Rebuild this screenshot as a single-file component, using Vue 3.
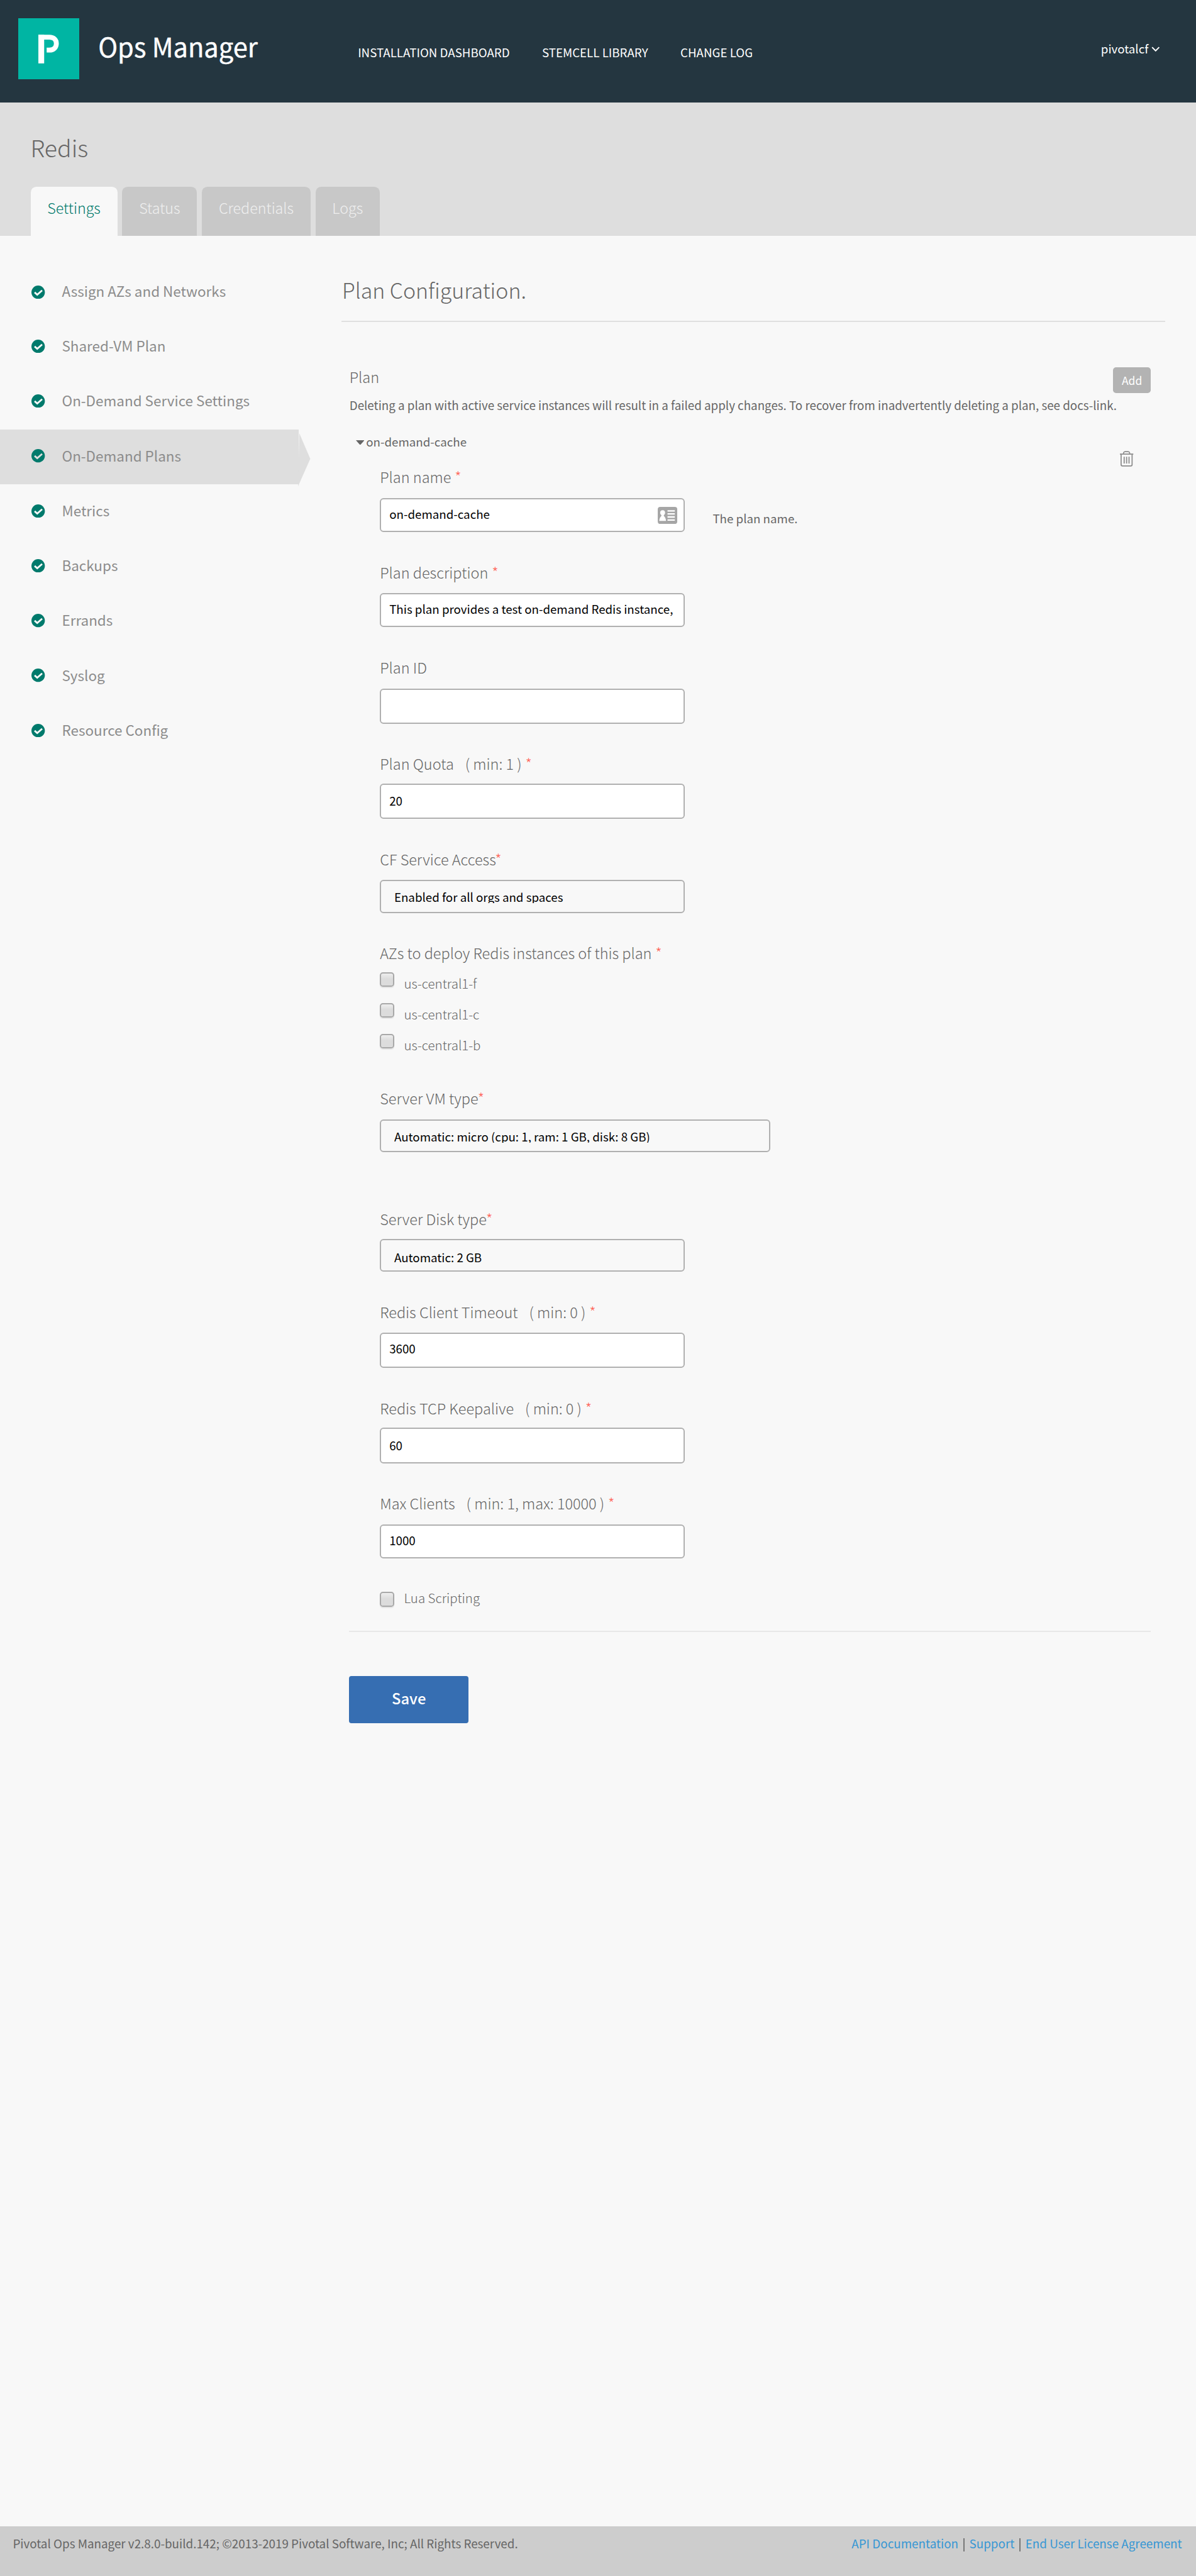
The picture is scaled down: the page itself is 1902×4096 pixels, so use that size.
<script setup>
const navLinks = ['INSTALLATION DASHBOARD', 'STEMCELL LIBRARY', 'CHANGE LOG']
const tabs = ['Settings', 'Status', 'Credentials', 'Logs']
const steps = [
  'Assign AZs and Networks',
  'Shared-VM Plan',
  'On-Demand Service Settings',
  'On-Demand Plans',
  'Metrics',
  'Backups',
  'Errands',
  'Syslog',
  'Resource Config',
]
const activeStep = 3

const fields = [
  { label: 'Plan name', required: true, value: 'on-demand-cache', help: 'The plan name.', card: true },
  { label: 'Plan description', required: true, value: 'This plan provides a test on-demand Redis instance,' },
  { label: 'Plan ID', value: '', size: 'tall' },
  { label: 'Plan Quota', range: '( min: 1 )', required: true, value: '20', size: 'tall snug' },
  { label: 'CF Service Access', required: true, tight: true, value: 'Enabled for all orgs and spaces', size: 'select' },
  {
    label: 'AZs to deploy Redis instances of this plan',
    required: true,
    zones: ['us-central1-f', 'us-central1-c', 'us-central1-b'],
  },
  {
    label: 'Server VM type',
    required: true,
    tight: true,
    value: 'Automatic: micro (cpu: 1, ram: 1 GB, disk: 8 GB)',
    size: 'select wide',
  },
  { label: 'Server Disk type', required: true, tight: true, value: 'Automatic: 2 GB', size: 'select snug', block: 'apart' },
  { label: 'Redis Client Timeout', range: '( min: 0 )', required: true, value: '3600', size: 'tall' },
  { label: 'Redis TCP Keepalive', range: '( min: 0 )', required: true, value: '60', size: 'tall snug' },
  { label: 'Max Clients', range: '( min: 1, max: 10000 )', required: true, value: '1000' },
]
</script>

<template>
  <div class="page">
    <header class="topbar">
      <svg class="logo" viewBox="0 0 100 100">
        <rect width="100" height="100" fill="#00b5a3" />
        <rect x="33" y="27" width="9.5" height="47" fill="#fff" />
        <path d="M33 31H51C58 31 62.500 35 62.500 41.500S58 52.200 51 52.200H46.600" fill="none" stroke="#fff" stroke-width="8" />
      </svg>
      <span class="brand">Ops Manager</span>
      <nav class="nav">
        <a v-for="link in navLinks" :key="link">{{ link }}</a>
      </nav>
      <div class="user">
        <span>pivotalcf</span>
        <svg width="14" height="9" viewBox="0 0 14 9">
          <path d="M1.200 1.200L7 7L12.800 1.200" fill="none" stroke="#fff" stroke-width="2" />
        </svg>
      </div>
    </header>

    <div class="subhead">
      <h1>Redis</h1>
      <div class="tabs">
        <a v-for="(tab, i) in tabs" :key="tab" class="tab" :class="{ active: i === 0 }">{{ tab }}</a>
      </div>
    </div>

    <div class="body">
      <ul class="steps">
        <li v-for="(step, i) in steps" :key="step" :class="{ active: i === activeStep }">
          <svg class="check" width="22" height="22" viewBox="0 0 22 22">
            <circle cx="11" cy="11" r="11" fill="#007a6c" />
            <path class="tick" d="M5.200 11.200L9.500 15L17.500 8" fill="none" stroke-width="3" />
          </svg>
          <span>{{ step }}</span>
          <svg v-if="i === activeStep" class="arrow" width="20" height="90" viewBox="0 0 20 90">
            <path d="M2 6L20 48L0 93Z" fill="#dedede" />
          </svg>
        </li>
      </ul>

      <main class="main">
        <h2>Plan Configuration.</h2>
        <section class="plans">
          <div class="plans-head">
            <span class="label">Plan</span>
            <button class="add">Add</button>
          </div>
          <p class="note">
            Deleting a plan with active service instances will result in a failed apply changes. To recover from inadvertently deleting a plan, see docs-link.
          </p>
          <div class="plan-head">
            <svg class="caret" width="14" height="8" viewBox="0 0 14 8"><path d="M0 0H14L7 8Z" fill="#666" /></svg>
            <span class="small">on-demand-cache</span>
            <svg class="trash" width="24" height="26" viewBox="0 0 24 26" fill="none" stroke="#8c8c8c" stroke-width="1.800">
              <path d="M1 5.200H23" />
              <path d="M7 5V3.200Q7.500 1.200 9.500 1.200H14.500Q16.500 1.200 17 3.200V5" />
              <path d="M3 5.500V22.500Q3 24.600 5 24.600H19Q21 24.600 21 22.500V5.500" />
              <path d="M8 9.500V20.500M12 9.500V20.500M16 9.500V20.500" />
            </svg>
          </div>

          <div v-for="field in fields" :key="field.label" class="field" :class="field.block">
            <div class="label">
              <span>{{ field.label }}</span>
              <span v-if="field.range" class="range">{{ field.range }}</span>
              <span v-if="field.required" class="star" :class="{ tight: field.tight }">*</span>
            </div>
            <div v-if="field.zones" class="zones">
              <label v-for="zone in field.zones" :key="zone"><i class="box"></i><span>{{ zone }}</span></label>
            </div>
            <div v-else class="row">
              <div class="input" :class="field.size">
                <span class="value">{{ field.value }}</span>
                <svg v-if="field.card" class="card" width="32" height="28" viewBox="0 0 32 28">
                  <rect width="32" height="28" rx="4" fill="#a6a6a6" />
                  <circle cx="8" cy="9.500" r="4" fill="#fff" />
                  <path d="M6 12H10V15Q13 17 13.500 23H2.500Q3 17 6 15Z" fill="#fff" />
                  <path d="M16 6.500H28M16 11.500H28M16 16.500H28M16 21.500H28" stroke="#fff" stroke-width="2.400" />
                </svg>
              </div>
              <span v-if="field.help" class="help">{{ field.help }}</span>
            </div>
          </div>

          <label class="lua"><i class="box"></i><span>Lua Scripting</span></label>
        </section>
        <button class="save">Save</button>
      </main>
    </div>

    <footer class="footer">
      <span class="legal">Pivotal Ops Manager v2.8.0-build.142; ©2013-2019 Pivotal Software, Inc; All Rights Reserved.</span>
      <div class="links">
        <a>API Documentation</a><i></i><a>Support</a><i></i><a>End User License Agreement</a>
      </div>
    </footer>
  </div>
</template>

<style>
body {
  background: #f8f8f8;
}
</style>

<style scoped>
.page {
  zoom: 0.970408;
  display: flex;
  flex-direction: column;
  width: 1960px;
  height: 4221px;
  overflow: hidden;
  background: #f8f8f8;
  color: #666;
  font-family: "Noto Sans CJK SC", "Noto Sans", sans-serif;
  font-size: 19.300px;
  line-height: 42px;
  white-space: nowrap;
}
.page * {
  box-sizing: border-box;
}
h1, h2, p, ul {
  margin: 0;
  padding: 0;
}
h1, h2 {
  font-weight: 300;
}
button {
  border: 0;
  padding: 0;
  font-family: inherit;
  color: #fff;
}

.topbar {
  display: flex;
  height: 168px;
  flex: none;
  background: #243640;
  color: #fff;
}
.logo {
  width: 100px;
  height: 100px;
  margin: 30px 0 0 30px;
}
.brand {
  width: 425.500px;
  margin: 45px 0 0 31px;
  font-size: 42.900px;
  line-height: 60px;
  -webkit-text-stroke: 0.400px;
}
.nav {
  display: flex;
  gap: 53px;
  margin-top: 65px;
}
.user {
  display: flex;
  gap: 5px;
  margin: 59px 59px 0 auto;
}
.user svg {
  margin-top: 17px;
}

.subhead {
  display: flex;
  flex-direction: column;
  justify-content: space-between;
  height: 218px;
  flex: none;
  padding: 43px 50px 0;
  background: #dedede;
}
h1 {
  font-size: 38.600px;
  line-height: 60px;
}
.tabs {
  display: flex;
  gap: 8px;
}
.tab {
  height: 80px;
  padding: 13px 27.600px 0;
  border-radius: 9px 9px 0 0;
  background: #c8c8c8;
  color: #efefef;
  font-size: 24px;
  font-weight: 300;
}
.tab.active {
  background: #f8f8f8;
  color: #007a6c;
}

.body {
  display: flex;
  flex: 1;
}
.steps {
  width: 560px;
  padding-top: 48px;
  list-style: none;
}
.steps li {
  display: flex;
  position: relative;
  width: 490px;
  height: 90px;
  padding: 21px 0 0 52px;
  gap: 27.500px;
  color: #8c8c8c;
  font-size: 23.150px;
}
.steps li.active {
  background: #dedede;
}
.check {
  margin-top: 11px;
}
li:first-child .check {
  margin-top: 13px;
}
.tick {
  stroke: #f8f8f8;
}
.active .tick {
  stroke: #dedede;
}
.arrow {
  position: absolute;
  top: 0;
  left: 488px;
  overflow: visible;
}

.main {
  width: 1350px;
}
h2 {
  height: 142px;
  padding: 58px 0 0 0.500px;
  border-bottom: 2.100px solid #e0e0e0;
  font-size: 34.900px;
  line-height: 62px;
}
.plans {
  height: 2146px;
  margin: 0 24px 0 12px;
  border-bottom: 2.100px solid #e8e8e8;
}
.label {
  height: 40px;
  padding-left: 0.700px;
  font-size: 24.200px;
  font-weight: 300;
}
.plans-head {
  display: flex;
  justify-content: space-between;
  padding-top: 69px;
  height: 115px;
}
.add {
  width: 62px;
  height: 42px;
  margin-top: 5px;
  border-radius: 5px;
  background: #b3b3b3;
  font-size: 18px;
}
.note {
  height: 40px;
  padding-left: 0.700px;
  font-size: 19.360px;
}
.plan-head {
  display: flex;
  height: 78px;
  padding: 20px 28px 0 11px;
}
.caret {
  margin-top: 18px;
}
.small {
  margin-left: 3px;
}
.trash {
  margin: 36px 0 0 auto;
}
.field {
  margin: 0 0 45px 50px;
}
.field.apart {
  margin-top: 89px;
}
.label .range {
  margin-left: 18.500px;
}
.label .star {
  margin-left: 6px;
  color: #ff6458;
}
.label .star.tight {
  margin-left: 0;
}
.row {
  display: flex;
}
.input {
  display: flex;
  justify-content: space-between;
  width: 500px;
  height: 56px;
  margin-top: 15px;
  padding: 3.300px 10px 0 14px;
  border: 2.100px solid #b0b0b0;
  border-radius: 6px;
  background: #fff;
  color: #000;
}
.input.tall {
  height: 58px;
}
.input.snug {
  margin-top: 13px;
  padding-top: 5.300px;
}
.input.select {
  height: 54px;
  padding: 5.300px 0 0 22px;
  background: #f8f8f8;
}
.input.select.snug {
  padding-top: 7.300px;
}
.input.wide {
  width: 640px;
}
.select:not(.snug) .value {
  height: 31px;
  overflow: hidden;
}
.card {
  margin-top: 9px;
}
.help {
  margin: 28px 0 0 46px;
}
.zones {
  height: 153px;
  padding-top: 10px;
}
.zones label, .lua {
  display: flex;
  height: 50.500px;
  gap: 16px;
  font-size: 21.100px;
  font-weight: 300;
  line-height: 40px;
}
.lua span {
  line-height: 38px;
}
.box {
  width: 24px;
  height: 24px;
  margin-top: 2px;
  border: 2.100px solid #a8a8a8;
  border-radius: 5px;
  background: linear-gradient(#eee, #dcdcdc 45%);
  box-shadow: 0 2px 1px #e4e4e4;
}
.lua {
  margin-left: 50px;
}
.lua .box {
  margin-top: 10px;
}
.save {
  width: 196px;
  height: 78px;
  margin: 72px 0 0 12px;
  padding-bottom: 7px;
  border-radius: 4px;
  background: #366eb2;
  font-size: 24.500px;
  font-weight: 500;
}

.footer {
  display: flex;
  justify-content: space-between;
  height: 81px;
  flex: none;
  padding: 7px 23px 0 21px;
  background: #cdcdcd;
  font-size: 19.400px;
}
.links {
  display: flex;
  color: #3797d4;
}
.links i {
  width: 2px;
  height: 22px;
  margin: 12px 8px;
  background: #777;
}
</style>
